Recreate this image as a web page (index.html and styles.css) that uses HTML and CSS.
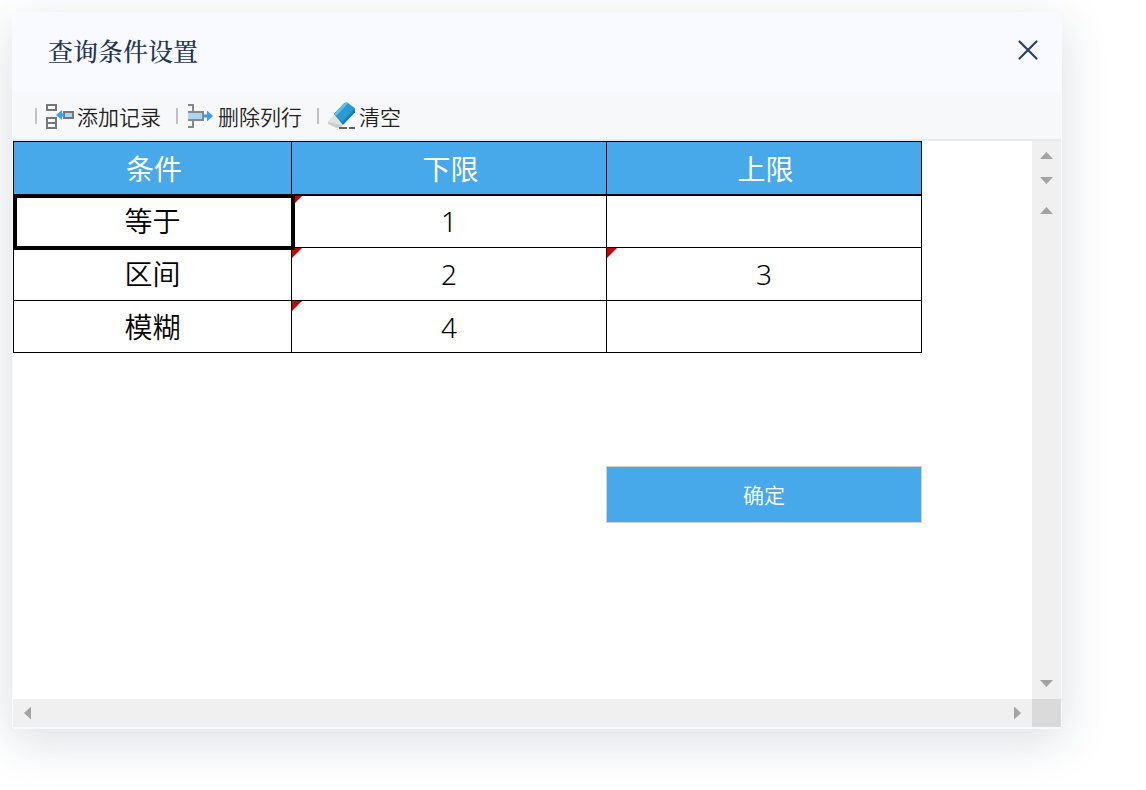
FILE: index.html
```
<!DOCTYPE html>
<html lang="zh-CN">

<head>
  <meta charset="utf-8">
  <title>查询条件设置</title>
  <link rel="stylesheet" href="styles.css">
</head>

<body>
  <div class="dialog" role="dialog" aria-labelledby="dialogTitle">
    <div class="header">
      <h1 id="dialogTitle" class="title">查询条件设置</h1>
      <button class="close" aria-label="关闭">
        <svg width="22" height="22" viewBox="0 0 22 22">
          <path d="M2.5 2.5l17 17M19.5 2.5l-17 17" fill="none" stroke="#254263" stroke-width="2.2" stroke-linecap="round" />
        </svg>
      </button>
    </div>

    <div class="toolbar">
      <button class="tool">
        <svg width="29" height="26" viewBox="0 0 29 26">
          <g fill="#fff" stroke="#777" stroke-width="2">
            <path d="M2 2h9v5H2zM2 15h9v10H2zM2 20h9" />
            <path d="M19 9h9v6h-9z" fill="#a9d5f7" />
          </g>
          <path d="M11 12l6-5v3.500h2v3h-2v3.500z" fill="#3f9bff" />
        </svg>
        添加记录
      </button>
      <button class="tool">
        <svg width="29" height="26" viewBox="0 0 29 26">
          <g fill="none" stroke="#888" stroke-width="2">
            <path d="M2 2h5v6M2 24h5v-6" />
            <path d="M2 9h15v8H2" fill="#a9d5f7" />
          </g>
          <path d="M18 11.500h3v-4l6 5.500-6 5.500v-4h-3z" fill="#3f9bff" />
        </svg>
        删除列行
      </button>
      <button class="tool">
        <svg width="29" height="28" viewBox="0 0 29 28">
          <path d="M1 20l6-7 9 10-3 3H9l-8-4z" fill="#cfcfcf" />
          <path d="M1 20l6-7 9 10-5-1z" fill="#e2e2e2" />
          <path d="M7 12L17 1.500l3-1 8 6v4L16 23z" fill="#1580b4" />
          <path d="M7 12L17 1.500l3-1 8 6L15 20z" fill="#2a9bd2" />
          <path d="M7 12L17 1.500l3-1 1 1L9 14z" fill="#63bfe5" />
          <path d="M12 26h8M22 26h6" stroke="#666" stroke-width="2" />
        </svg>
        清空
      </button>
    </div>

    <div class="content">
      <div class="sheet">
        <table class="grid">
          <colgroup>
            <col class="col-name">
            <col>
            <col>
          </colgroup>
          <thead>
            <tr>
              <th>条件</th>
              <th>下限</th>
              <th>上限</th>
            </tr>
          </thead>
          <tbody>
            <tr>
              <td class="selected">等于</td>
              <td class="marked">1</td>
              <td></td>
            </tr>
            <tr>
              <td>区间</td>
              <td class="marked">2</td>
              <td class="marked">3</td>
            </tr>
            <tr>
              <td>模糊</td>
              <td class="marked">4</td>
              <td></td>
            </tr>
          </tbody>
        </table>
        <div class="actions">
          <button class="confirm">确定</button>
        </div>
      </div>

      <div class="scroll-y">
        <button class="arrow up" aria-label="上一页"></button>
        <button class="arrow down" aria-label="下一页"></button>
        <button class="arrow up track-start" aria-label="向上滚动"></button>
        <button class="arrow down track-end" aria-label="向下滚动"></button>
      </div>
      <div class="scroll-x">
        <button class="arrow left" aria-label="向左滚动"></button>
        <button class="arrow right" aria-label="向右滚动"></button>
      </div>
      <div class="corner"></div>
    </div>
  </div>
</body>

</html>
```
FILE: styles.css
```
* {
  box-sizing: border-box;
  margin: 0;
  padding: 0;
}

body {
  display: flex;
  min-height: 100vh;
  padding: 12px 84px 61px 12px;
  font-family: "Noto Sans", "Noto Sans CJK SC", sans-serif;
  background: #fff;
  color: #000;
}

button {
  border: none;
  background: none;
  color: inherit;
  font: inherit;
  cursor: pointer;
}

.dialog {
  display: flex;
  flex: 1;
  flex-direction: column;
  padding-bottom: 2px;
  border-radius: 4px;
  background: #f8faff;
  box-shadow: 0 12px 48px rgba(30, 48, 80, 0.16);
}

.header {
  display: flex;
  align-items: center;
  justify-content: space-between;
  height: 80px;
  padding: 0 23px 4px 36px;
}

.title {
  font-family: "Noto Serif CJK SC", "Noto Sans CJK SC", serif;
  font-size: 25px;
  font-weight: 500;
  color: #1f3550;
}

.close {
  display: flex;
}

.toolbar {
  display: flex;
  align-items: center;
  gap: 15px;
  height: 49px;
  margin: 0 1px;
  padding-left: 22px;
  border-bottom: 2px solid #e8eaf0;
  background: #f6f8fa;
}

.tool {
  display: flex;
  align-items: center;
  gap: 3px;
  font-family: "Noto Sans CJK SC", sans-serif;
  font-size: 21px;
  font-weight: 350;
  line-height: 28px;
  color: #222;
}

.tool::before {
  content: '';
  width: 2px;
  height: 16px;
  margin-right: 5px;
  background: #c0c0c0;
}

.content {
  display: grid;
  flex: 1;
  grid-template-columns: 1fr 29px;
  grid-template-rows: 1fr 28px;
  margin: 0 1px;
}

.sheet {
  padding-right: 110px;
  background: #fff;
}

.grid {
  width: 100%;
  table-layout: fixed;
  border-collapse: collapse;
  font-size: 28px;
  font-weight: 350;
  line-height: 40px;
  text-align: center;
}

.col-name {
  width: 278px;
}

.grid th,
.grid td {
  position: relative;
  height: 53px;
  border: 1px solid #000;
}

.grid th {
  padding: 2px 0 0 3px;
  border-bottom-width: 2px;
  background: #47a8ea;
  font-weight: 400;
  color: #fff;
}

.grid tr:last-child td {
  height: 52px;
}

.selected::after {
  content: '';
  position: absolute;
  inset: -2px -4px -3px -1px;
  z-index: 1;
  border: 4px solid #000;
}

.marked::before {
  content: '';
  position: absolute;
  top: 0;
  left: 0;
  border-top: 10px solid #c80000;
  border-right: 10px solid transparent;
}

.actions {
  display: grid;
  grid-template-columns: 277px 1fr 1fr;
  margin-top: 113px;
}

.confirm {
  grid-column: 3;
  height: 57px;
  padding-bottom: 2px;
  border: 1px solid #d0d0d0;
  background: #47a8ea;
  font-size: 21px;
  font-weight: 350;
  color: #fff;
}

.scroll-y {
  display: flex;
  flex-direction: column;
  align-items: center;
  padding: 11px 0 12px;
  background: #f0f0f0;
}

.scroll-x {
  display: flex;
  align-items: center;
  justify-content: space-between;
  padding: 0 11px;
  background: #f0f0f0;
}

.arrow {
  width: 13px;
  height: 7px;
  background: #a3a3a3;
}

.up {
  clip-path: polygon(50% 0, 100% 100%, 0 100%);
}

.down {
  margin-top: 18px;
  clip-path: polygon(0 0, 100% 0, 50% 100%);
}

.track-start {
  margin-top: 23px;
}

.track-end {
  margin-top: auto;
}

.left,
.right {
  width: 7px;
  height: 13px;
  margin: 0;
}

.left {
  clip-path: polygon(0 50%, 100% 0, 100% 100%);
}

.right {
  clip-path: polygon(0 0, 100% 50%, 0 100%);
}

.corner {
  background: #dadada;
}
```
